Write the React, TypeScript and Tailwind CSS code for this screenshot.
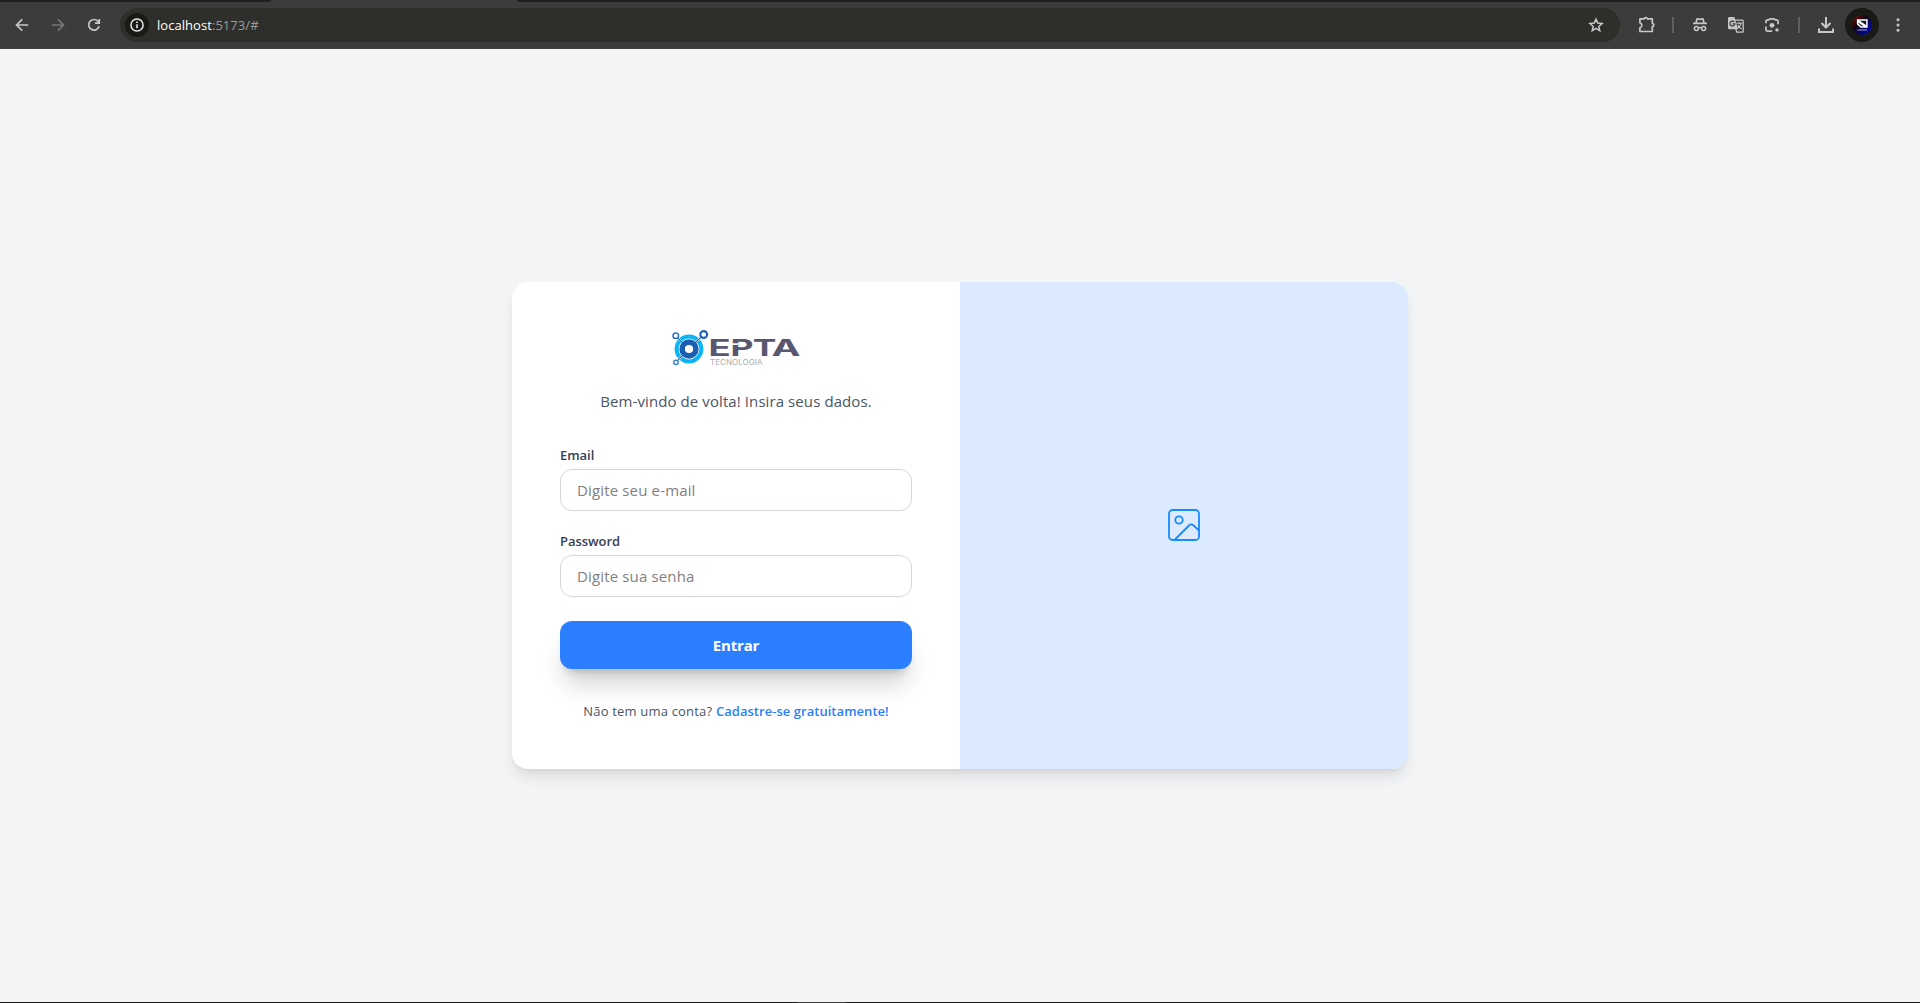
import type { ReactNode } from "react";

function ToolButton({ children, label }: { children: ReactNode; label: string }) {
  return (
    <button aria-label={label} className="flex size-9 shrink-0 items-center justify-center text-[#c7c7c7]">
      {children}
    </button>
  );
}

function Icon({ children, className = "" }: { children: ReactNode; className?: string }) {
  return (
    <svg viewBox="0 0 20 20" fill="none" stroke="currentColor" strokeWidth="1.7" className={"size-5 " + className}>
      {children}
    </svg>
  );
}

function Divider() {
  return (
    <div className="flex w-[18px] shrink-0 justify-center">
      <div className="h-4 w-0.5 bg-[#606060]" />
    </div>
  );
}

function BrowserBar() {
  return (
    <header className="flex h-[49px] shrink-0 flex-col bg-[#3c3c3c] font-['Open_Sans',sans-serif]">
      <div className="flex h-0.5 justify-between">
        <div className="w-[271px] rounded-br-sm bg-[#202020]" />
        <div className="w-[1403px] rounded-bl-sm bg-[#202020]" />
      </div>
      <div className="flex h-[46px] items-center pl-1">
        <ToolButton label="Voltar">
          <Icon><path d="M16.200 10H4.800M10.200 4.300 4.500 10l5.700 5.700" /></Icon>
        </ToolButton>
        <ToolButton label="Avançar">
          <Icon className="text-[#777]"><path d="M3.800 10h11.400M9.800 4.300l5.700 5.700-5.700 5.700" /></Icon>
        </ToolButton>
        <ToolButton label="Recarregar">
          <Icon>
            <path d="M15.100 11.300a5.300 5.300 0 1 1-1.200-5.100L15.300 8" />
            <path d="M15.300 4v4.200H11" />
          </Icon>
        </ToolButton>
        <div className="ml-2 flex h-[34px] w-[1500px] shrink-0 items-center rounded-full bg-[#2e2e2a] pl-[5px] pr-1.5">
          <div className="flex size-6 items-center justify-center rounded-full bg-[#191916] text-[#e8e8e8]">
            <Icon>
              <circle cx="10" cy="10" r="6.1" strokeWidth="1.5" />
              <path d="M10 9.2v4M10 6.4v1.500" strokeWidth="1.600" />
            </Icon>
          </div>
          <div className="ml-2 grow pt-px text-[13px] tracking-[0.05px] text-[#9b9b98]">
            <span className="text-white">localhost</span>:5173/#
          </div>
          <ToolButton label="Favoritos">
            <Icon>
              <path strokeWidth="1.500" d="m10 4.100 1.750 4 4.350.4-3.300 2.900 1 4.300-3.800-2.300-3.800 2.300 1-4.300-3.300-2.900 4.350-.4z" />
            </Icon>
          </ToolButton>
        </div>
        <div className="ml-2 flex items-center">
          <ToolButton label="Extensões">
            <Icon>
              <path
                strokeWidth="1.700"
                strokeLinejoin="round"
                d="M3.900 3.900h4.300c.2-1.800 3-1.800 3.200 0h4.900v4.500c2 .2 2 3 0 3.200V16.500H3.900v-3.600c2.600-.8 2.600-4.400 0-5.200z"
              />
            </Icon>
          </ToolButton>
          <Divider />
          <ToolButton label="Anônimo">
            <Icon>
              <path fill="currentColor" stroke="none" d="M6.300 3.500Q6.600 2.700 7.500 3L10 3.500 12.500 3q.9-.3 1.200.5L14.800 7.500H17V9.300H3V7.500H5.200z" />
              <path fill="#3c3c3c" stroke="none" d="M7.700 4.800 7 7.500h6l-.7-2.700-2.300.5z" />
              <circle cx="6.400" cy="13.500" r="2" strokeWidth="1.600" />
              <circle cx="13.600" cy="13.500" r="2" strokeWidth="1.600" />
              <path d="M8.400 13q1.600-.9 3.200 0" strokeWidth="1.500" />
            </Icon>
          </ToolButton>
          <ToolButton label="Traduzir">
            <Icon>
              <path d="M8 5.200h8.200q1 0 1 1v10.200q0 .8-.9.800H10.800L7.500 6" strokeWidth="1.300" />
              <path fill="currentColor" stroke="none" d="M3.400 2H8.300l3.800 12.300H3.400q-1.400 0-1.400-1.400V3.400Q2 2 3.400 2" />
              <path stroke="#3c3c3c" strokeWidth="1.200" d="M8.300 6.900a2.500 2.500 0 1 0 .6 2H6.500" />
              <path strokeWidth="1.100" d="M10.500 8.300h5.700M13.300 7v1.300M15.200 8.400q-.8 3-3.600 5M11.800 10q1.200 2.300 3.800 4" />
            </Icon>
          </ToolButton>
          <ToolButton label="Pesquisar imagem">
            <Icon>
              <path d="M3.900 8.200V6.500q0-1.700 1.700-1.700h1.200L8 3.800h4l1.200 1h1.200q1.700 0 1.700 1.700v2.700M3.900 11.500v2.700q0 1.900 1.900 1.900h4.400" strokeWidth="1.700" />
              <circle cx="10" cy="10.300" r="2.400" fill="currentColor" stroke="none" />
              <circle cx="15" cy="14.900" r="1.700" fill="currentColor" stroke="none" />
            </Icon>
          </ToolButton>
          <Divider />
          <ToolButton label="Downloads">
            <Icon>
              <path strokeWidth="2" d="M10 2v10.300M5.500 8l4.500 4.500L14.500 8M3 13.500V17h14v-3.500" />
            </Icon>
          </ToolButton>
          <ToolButton label="Perfil">
            <svg viewBox="0 0 34 34" className="size-[34px]">
              <defs>
                <linearGradient id="avatar" x1="0" y1="0" x2="1" y2="1">
                  <stop offset="0" stopColor="#a30808" />
                  <stop offset=".35" stopColor="#1a0508" />
                  <stop offset=".6" stopColor="#06065a" />
                  <stop offset="1" stopColor="#0505dd" />
                </linearGradient>
              </defs>
              <circle cx="17" cy="17" r="17" fill="#191916" />
              <circle cx="17" cy="17" r="10" fill="url(#avatar)" />
              <path d="M12.600 12.100h9.300v7H16l-3.400-3.200z" stroke="#fff" strokeWidth="1.500" fill="#14142a" />
              <path d="m13 13 8 5.500" stroke="#fff" strokeWidth="2.400" />
              <path d="M12.500 22h9.500" stroke="#a5a5d5" strokeWidth="1" />
            </svg>
          </ToolButton>
          <ToolButton label="Menu">
            <Icon>
              <g fill="currentColor" stroke="none">
                <circle cx="10" cy="4.700" r="1.500" />
                <circle cx="10" cy="10" r="1.500" />
                <circle cx="10" cy="15.300" r="1.500" />
              </g>
            </Icon>
          </ToolButton>
        </div>
      </div>
    </header>
  );
}

const wordmark = [
  { letter: "E", x: 36.4, width: 22.2 },
  { letter: "P", x: 58.6, width: 23 },
  { letter: "T", x: 80.8, width: 23.6 },
  { letter: "A", x: 99.4, width: 29 },
];

function Logo() {
  return (
    <svg viewBox="0 0 128 43" className="h-[43px] w-32 overflow-visible" role="img" aria-label="EPTA Tecnologia">
      <circle cx="17" cy="19" r="12.400" fill="#fff" stroke="#0cb4f5" strokeWidth="4" />
      <path d="M5.500 7.800 12 14M29 7.200 22 14M5.500 30.700 12 24" stroke="#fff" strokeWidth="2.200" />
      <path d="M5.500 7.800 12 14M29 7.200 22 14M5.500 30.700 12 24" stroke="#1e5fb0" strokeWidth="1.100" />
      <circle cx="17" cy="19" r="6.900" fill="#fff" stroke="#1b5fb3" strokeWidth="5.600" />
      <circle cx="3.800" cy="5.700" r="2.800" fill="#fff" stroke="#2a74c4" strokeWidth="1.500" />
      <circle cx="31.700" cy="4.500" r="3.400" fill="#fff" stroke="#1f63b5" strokeWidth="2.100" />
      <circle cx="4" cy="32.300" r="2.200" fill="#fff" stroke="#2a80d0" strokeWidth="1.400" />
      <g fill="#59566f" className="font-['Inter',sans-serif] text-[22.5px] font-bold">
        {wordmark.map(({ letter, x, width }) => (
          <text key={letter} x={x} y="25.500" textLength={width} lengthAdjust="spacingAndGlyphs">
            {letter}
          </text>
        ))}
      </g>
      <path d="M58.500 13.300h8l-1 1.700h-7z" fill="#fff" />
      <text x="38" y="35" textLength="52.500" lengthAdjust="spacingAndGlyphs" fill="#aaaaae" className="font-['Inter',sans-serif] text-[7.5px]">
        TECNOLOGIA
      </text>
    </svg>
  );
}

function Field({ id, label, type, placeholder }: { id: string; label: string; type: string; placeholder: string }) {
  return (
    <div className="flex flex-col">
      <label htmlFor={id} className="mb-1 text-[13px] leading-5 font-semibold tracking-[-0.04px] text-gray-700">
        {label}
      </label>
      <input
        id={id}
        type={type}
        placeholder={placeholder}
        className="h-[42px] w-full rounded-xl border border-gray-300 px-4 text-[15px] tracking-[0.15px] placeholder:text-[#808080]"
      />
    </div>
  );
}

export default function App() {
  return (
    <div className="flex h-[1003px] w-[1920px] flex-col overflow-hidden bg-gray-100">
      <BrowserBar />
      <main className="flex grow items-center justify-center font-['Open_Sans',sans-serif]">
        <div className="grid h-[487px] w-4xl grid-cols-2 overflow-hidden rounded-2xl bg-white shadow-lg">
          <section className="p-12">
            <div className="flex justify-center">
              <Logo />
            </div>
            <p className="mt-4 text-center text-[15px] leading-6 tracking-[0.09px] whitespace-nowrap text-gray-600">
              Bem-vindo de volta! Insira seus dados.
            </p>
            <form className="mt-8 flex flex-col gap-5">
              <Field id="email" label="Email" type="email" placeholder="Digite seu e-mail" />
              <Field id="password" label="Password" type="password" placeholder="Digite sua senha" />
              <button
                type="button"
                className="mt-1 h-12 rounded-xl bg-[#2b7fff] text-[15px] font-bold tracking-[-0.2px] text-white shadow-[0_20px_25px_-5px_rgba(0,0,0,0.17),0_8px_10px_-6px_rgba(0,0,0,0.2)]"
              >
                Entrar
              </button>
            </form>
            <p className="mt-8 text-center text-[13px] leading-5 tracking-[0.19px] whitespace-nowrap text-gray-600">
              Não tem uma conta?{" "}
              <a href="#" className="font-semibold tracking-[0.04px] text-[#2b7fff]">Cadastre-se gratuitamente!</a>
            </p>
          </section>
          <section className="flex items-center justify-center bg-blue-100 pb-px">
            <svg viewBox="0 0 32 32" fill="none" stroke="#168bff" strokeWidth="1.800" className="size-8">
              <rect x="1" y="1" width="30" height="30" rx="3.500" />
              <circle cx="11" cy="11" r="3.700" />
              <path d="m7 30.500 14-14q2.300-2.200 4.600 0L31 21.500" />
            </svg>
          </section>
        </div>
      </main>
      <footer className="flex h-px shrink-0 bg-[#1c1c1c] pl-[798px]">
        <div className="w-12 bg-[#3a3a3a]" />
      </footer>
    </div>
  );
}
